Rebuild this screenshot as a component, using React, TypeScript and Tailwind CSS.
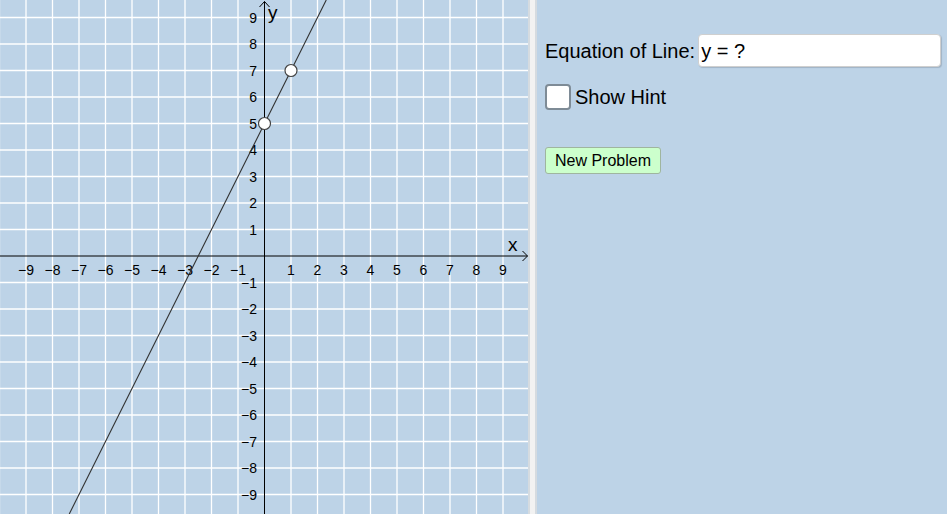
import React from 'react';

const UNIT = 26.5;
const OX = 264.5;
const OY = 256;
const W = 528;
const H = 514;

const px = (x: number) => OX + x * UNIT;
const py = (y: number) => OY - y * UNIT;

const TICKS = [-9, -8, -7, -6, -5, -4, -3, -2, -1, 1, 2, 3, 4, 5, 6, 7, 8, 9];
const GRID = [-10, -9, -8, -7, -6, -5, -4, -3, -2, -1, 1, 2, 3, 4, 5, 6, 7, 8, 9, 10];

const label = (n: number) => (n < 0 ? `\u2212${-n}` : `${n}`);

function Graph() {
  // line y = 2x + 5
  const yTop = OY / UNIT;
  const yBot = -(H - OY) / UNIT;
  const xTop = (yTop - 5) / 2;
  const xBot = (yBot - 5) / 2;

  return (
    <svg width={W} height={H} className="block shrink-0" fontFamily="'Liberation Sans', Arial, sans-serif">
      <rect width={W} height={H} fill="#bdd3e7" />
      <g stroke="#ffffff" strokeWidth={1.3}>
        {GRID.map((k) => (
          <line key={`v${k}`} x1={px(k)} y1={0} x2={px(k)} y2={H} />
        ))}
        {GRID.map((k) => (
          <line key={`h${k}`} x1={0} y1={py(k)} x2={W} y2={py(k)} />
        ))}
      </g>

      {/* axes */}
      <g stroke="#000" strokeWidth={1} fill="none">
        <line x1={OX} y1={1.5} x2={OX} y2={H} />
        <line x1={0} y1={OY} x2={527.5} y2={OY} />
        <polyline points={`${OX - 5},7 ${OX},1.5 ${OX + 5},7`} />
        <polyline points={`522.5,251 527.5,${OY} 522.5,261`} />
      </g>

      {/* tick labels */}
      <g fontSize={14} fill="#000">
        {TICKS.map((k) => (
          <text key={`xl${k}`} x={px(k)} y={275} textAnchor="middle">
            {label(k)}
          </text>
        ))}
        {TICKS.map((k) => (
          <text key={`yl${k}`} x={257} y={py(k) + 5} textAnchor="end">
            {label(k)}
          </text>
        ))}
      </g>
      <text x={268} y={19} fontSize={19} fill="#000">y</text>
      <text x={508} y={251} fontSize={19} fill="#000">x</text>

      {/* the line */}
      <line x1={px(xTop)} y1={0} x2={px(xBot)} y2={H} stroke="#333" strokeWidth={1.1} />

      {/* points */}
      <circle cx={px(0)} cy={py(5)} r={6} fill="#fff" stroke="#444" strokeWidth={1.2} />
      <circle cx={px(1)} cy={py(7)} r={6} fill="#fff" stroke="#444" strokeWidth={1.2} />
    </svg>
  );
}

export default function App() {
  return (
    <div className="flex h-[514px] w-[947px] overflow-hidden bg-[#bdd3e7] font-['Liberation_Sans',Arial,sans-serif] text-black">
      <Graph />

      {/* divider */}
      <div className="flex shrink-0">
        <div className="w-[2px] bg-[#d5dbe0]" />
        <div className="w-[5px] bg-[#f2f2f2]" />
        <div className="w-[2px] bg-[#d5dbe0]" />
      </div>

      {/* controls */}
      <div className="flex flex-1 flex-col items-start pl-2 pt-[34px]">
        <div className="flex h-[33px] items-center">
          <span className="text-[20px] leading-none">Equation of Line:</span>
          <div className="ml-[3px] flex h-[33px] w-[243px] items-center rounded-[4px] border border-[#cfcfcf] bg-white pl-[2px] text-[20px] shadow-[1px_1px_1px_rgba(0,0,0,0.15)]">
            y = ?
          </div>
        </div>

        <div className="mt-[17px] flex items-center">
          <div className="h-[26px] w-[26px] rounded-[4px] border-2 border-[#7e8b96] bg-white" />
          <span className="ml-[4px] text-[20px] leading-none">Show Hint</span>
        </div>

        <button className="mt-[37px] flex h-[27px] w-[116px] items-center justify-center rounded-[3px] border border-[#9fb59f] bg-[#ccffcc] text-[16px] leading-none text-black">
          New Problem
        </button>
      </div>
    </div>
  );
}
